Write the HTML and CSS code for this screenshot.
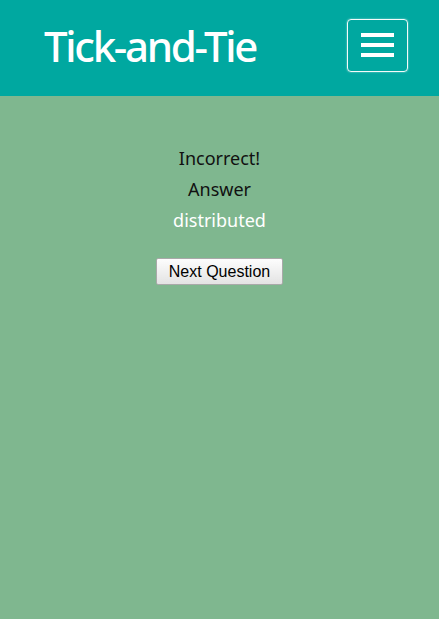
FILE: index.html
```html
<!DOCTYPE html>
<html>
<head>
<meta charset="utf-8">
<link rel="stylesheet" href="styles.css">
</head>
<body>
<header class="topbar">
  <h1 class="brand">Tick-and-Tie</h1>
  <button class="menu-btn" aria-label="Menu">
    <span class="bar"></span><span class="bar"></span><span class="bar"></span>
  </button>
</header>
<main class="content">
  <p class="line">Incorrect!</p>
  <p class="line">Answer</p>
  <p class="line answer">distributed</p>
  <button class="next-btn">Next Question</button>
</main>
</body>
</html>
```
FILE: styles.css
```css
html, body {
  margin: 0;
  padding: 0;
  height: 100%;
}
body {
  background: #7fb78f;
  font-family: "Noto Sans", sans-serif;
}
.topbar {
  height: 96px;
  background: #00a8a0;
  display: flex;
  align-items: center;
  justify-content: space-between;
  padding: 0 31px 0 44px;
  box-sizing: border-box;
}
.brand {
  margin: 0 0 4px 0;
  color: #fff;
  font-weight: 500;
  font-size: 42px;
  letter-spacing: -2.3px;
  line-height: 1;
}
.menu-btn {
  width: 61px;
  height: 53px;
  background: transparent;
  border: 1px solid #f4fbfa;
  border-radius: 4px;
  box-shadow: 0 0 2px rgba(255,255,255,0.6);
  display: flex;
  flex-direction: column;
  align-items: center;
  justify-content: center;
  gap: 6px;
  padding: 0;
  margin-bottom: 6px;
}
.bar {
  display: block;
  width: 33px;
  height: 4px;
  background: #fff;
}
.content {
  display: flex;
  flex-direction: column;
  align-items: center;
  padding-top: 47px;
}
.line {
  margin: 0;
  font-size: 18px;
  line-height: 31px;
  color: #111;
}
.answer {
  color: #fff;
}
.next-btn {
  margin-top: 22px;
  font-family: "Liberation Sans", Arial, sans-serif;
  font-size: 16px;
  color: #000;
  height: 27px;
  padding: 0 12px;
  background: linear-gradient(#fdfdfd, #e3e3e3);
  border: 1px solid #a9a9a9;
  border-radius: 2px;
}
```
